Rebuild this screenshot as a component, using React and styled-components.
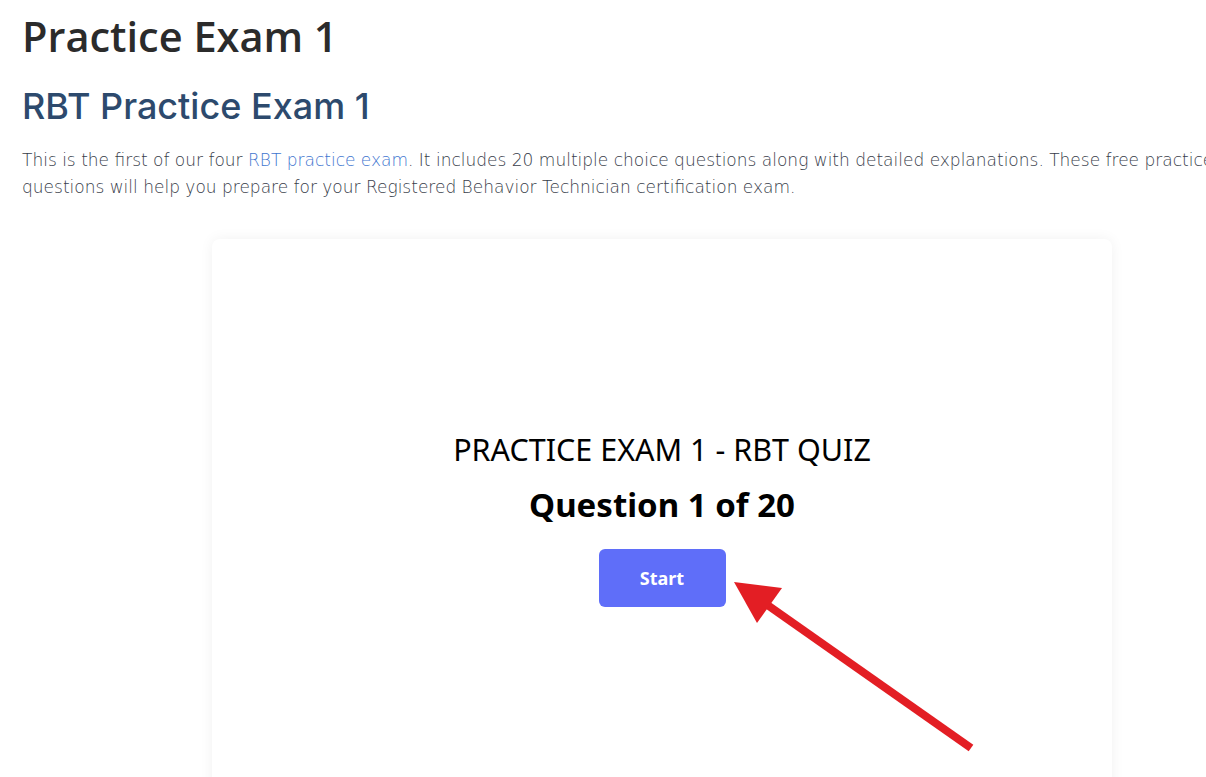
import React from "react";
import styled, { createGlobalStyle } from "styled-components";

const GlobalStyle = createGlobalStyle`
  html, body {
    margin: 0;
    padding: 0;
    background: #ffffff;
    overflow: hidden;
  }
`;

const Page = styled.div`
  width: 1324px;
  box-sizing: border-box;
  padding: 6px 22px 0;
  position: relative;
`;

const Title = styled.h1`
  margin: 0;
  font-family: "Open Sans", "Noto Sans", sans-serif;
  font-weight: 600;
  font-size: 41.5px;
  line-height: 60px;
  color: #2b2b2b;
`;

const Subtitle = styled.h2`
  margin: 16px 0 0;
  font-family: "Inter", "Lato", sans-serif;
  font-weight: 500;
  font-size: 36px;
  line-height: 48px;
  color: #2d4a6d;
`;

const Intro = styled.p`
  margin: 17px 0 0;
  font-family: "DejaVu Sans", "Inter", sans-serif;
  font-weight: 300;
  font-size: 17px;
  line-height: 27px;
  color: #383d4a;
  white-space: nowrap;
`;

const Link = styled.a`
  color: #3f76cf;
  text-decoration: none;
`;

const Card = styled.section`
  width: 900px;
  min-height: 600px;
  margin: 38px auto 0;
  background: #fff;
  border-radius: 8px;
  box-shadow: 0 0 14px rgba(0, 0, 0, 0.06);
  display: flex;
  flex-direction: column;
  align-items: center;
  padding-top: 190px;
  box-sizing: border-box;
  font-family: "Noto Sans", "Open Sans", sans-serif;
  color: #000;
`;

const QuizName = styled.div`
  font-size: 30.5px;
  line-height: 40px;
  font-weight: 400;
`;

const Counter = styled.div`
  margin-top: 14px;
  font-size: 33px;
  line-height: 44px;
  font-weight: 700;
`;

const StartButton = styled.button`
  margin-top: 22px;
  width: 127px;
  height: 58px;
  border: none;
  border-radius: 6px;
  background: #5f6ef9;
  color: #fff;
  font-family: inherit;
  font-size: 18px;
  font-weight: 700;
  cursor: pointer;
`;

const Arrow = styled.svg`
  position: absolute;
  left: 0;
  top: 0;
  pointer-events: none;
`;

export default function App() {
  return (
    <>
      <GlobalStyle />
      <Page>
        <Title>Practice Exam 1</Title>
        <Subtitle>RBT Practice Exam 1</Subtitle>
        <Intro>
          This is the first of our four <Link href="#">RBT practice exam</Link>. It includes 20 multiple choice questions along with detailed explanations. These free practice
          <br />
          questions will help you prepare for your Registered Behavior Technician certification exam.
        </Intro>
        <Card>
          <QuizName>PRACTICE EXAM 1 - RBT QUIZ</QuizName>
          <Counter>Question 1 of 20</Counter>
          <StartButton>Start</StartButton>
        </Card>
        <Arrow width="1206" height="777" viewBox="0 0 1206 777">
          <line x1="971" y1="748" x2="766" y2="604" stroke="#e31e24" strokeWidth="8" />
          <polygon points="734,582 782,588 757,623" fill="#e31e24" />
        </Arrow>
      </Page>
    </>
  );
}
